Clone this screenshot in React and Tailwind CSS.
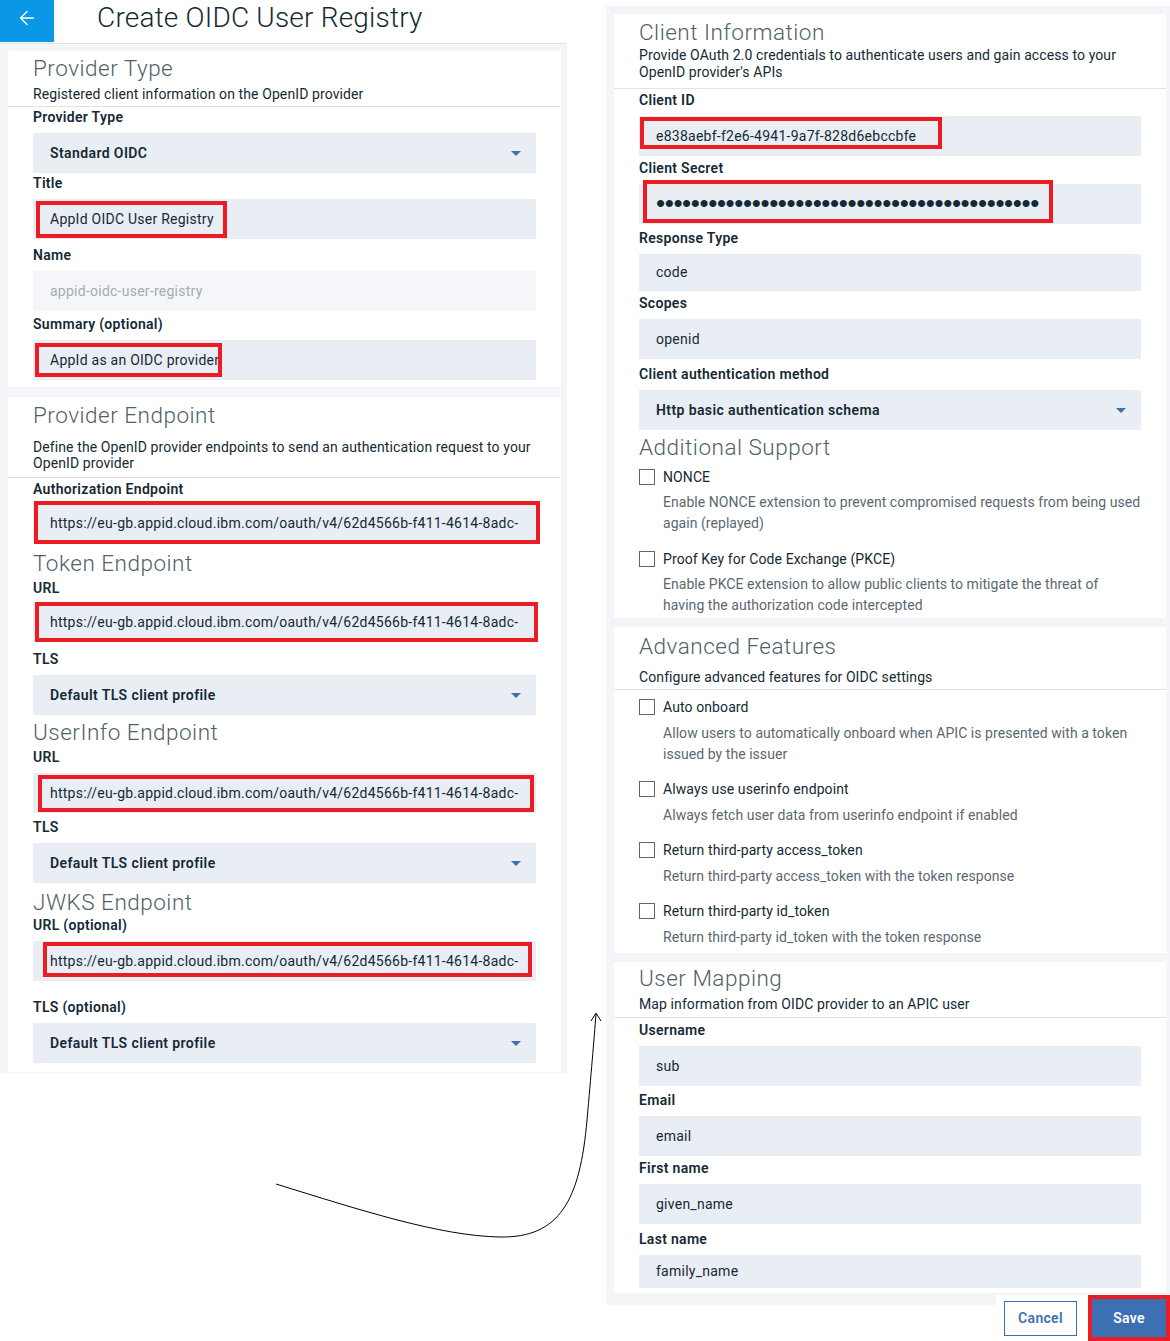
import React from 'react';
import { ArrowLeft } from 'lucide-react';

function Caret() {
  return (
    <svg width="10" height="5" viewBox="0 0 10 5" className="absolute right-[15px] top-[18px]">
      <path d="M0 0h10L5 5z" fill="#3d70b2" />
    </svg>
  );
}

function Heading({ children, className = '' }) {
  return (
    <div className={`text-[22.5px] font-light tracking-[0.5px] leading-[28px] text-[#515f69] whitespace-nowrap ${className}`}>
      {children}
    </div>
  );
}

function Label({ children, className = '' }) {
  return (
    <div className={`h-[18px] leading-[18px] text-[14px] tracking-[0.3px] font-semibold text-[#152935] whitespace-nowrap ${className}`}>
      {children}
    </div>
  );
}

function Field({ className = '', h = 'h-[40px]', text, bold = false, disabled = false, select = false, red, children }) {
  return (
    <div
      className={`relative ${h} ${disabled ? 'bg-[#f4f6f9] text-[#a3acb4]' : 'bg-[#e9eef5] text-[#152935]'} flex items-center px-[17px] text-[14px] ${bold ? 'font-semibold tracking-[0.4px]' : 'tracking-[0.25px]'} whitespace-nowrap ${className}`}
    >
      {children ?? text}
      {select && <Caret />}
      {red && <div className={`absolute border-[4px] border-[#ec1c24] ${red}`} />}
    </div>
  );
}

function Check({ label, className = '' }) {
  return (
    <div className={`flex items-center h-[18px] ${className}`}>
      <div className="w-[16px] h-[16px] border border-[#5a6872] bg-white shrink-0" />
      <div className="ml-[8px] text-[14px] leading-[18px] tracking-[0.1px] text-[#152935] whitespace-nowrap">{label}</div>
    </div>
  );
}

function Desc({ children, className = '' }) {
  return (
    <div className={`pl-[24px] text-[14px] leading-[21px] tracking-[0.05px] text-[#5a6872] whitespace-nowrap ${className}`}>
      {children}
    </div>
  );
}

function CardDesc({ children, className = '', lh = 'leading-[17px]' }) {
  return (
    <div className={`text-[14px] ${lh} tracking-[0.1px] text-[#152935] whitespace-nowrap ${className}`}>{children}</div>
  );
}

const URL = 'https://eu-gb.appid.cloud.ibm.com/oauth/v4/62d4566b-f411-4614-8adc-';

export default function App() {
  return (
    <div className="relative w-[1170px] h-[1341px] overflow-hidden bg-white font-['Roboto','Liberation_Sans',sans-serif] flex items-start">
      {/* Left column */}
      <div className="w-[567px] shrink-0 flex flex-col">
        <div className="h-[44px] border-b border-[#dfe3e6] flex items-start">
          <div className="w-[54px] h-[42px] bg-[#0a97e6] flex items-center justify-center pb-[6px]">
            <ArrowLeft size={22} strokeWidth={1.5} color="#ffffff" />
          </div>
          <div className="ml-[43px] text-[28px] font-light tracking-[0.2px] leading-[36px] text-[#152935] whitespace-nowrap">
            Create OIDC User Registry
          </div>
        </div>
        <div className="bg-[#f4f5f8] pt-[7px] pl-[8px] pr-[6px] pb-[1px] flex flex-col gap-[10px]">
          {/* Card 1 */}
          <div className="bg-white pt-[3px] pb-[7px]">
            <div className="px-[25px] pb-[4px] border-b border-[#dfe3e6]">
              <Heading>Provider Type</Heading>
              <CardDesc className="mt-[4px]" lh="leading-[16px]">
                Registered client information on the OpenID provider
              </CardDesc>
            </div>
            <div className="px-[25px]">
              <Label className="mt-[1px]">Provider Type</Label>
              <Field className="mt-[7px]" select bold text="Standard OIDC" />
              <Label className="mt-[1px]">Title</Label>
              <Field className="mt-[7px]" text="AppId OIDC User Registry" red="left-[3px] top-[2px] w-[191px] h-[37px]" />
              <Label className="mt-[7px]">Name</Label>
              <Field className="mt-[7px]" disabled text="appid-oidc-user-registry" />
              <Label className="mt-[4px]">Summary (optional)</Label>
              <Field className="mt-[7px]" text="AppId as an OIDC provider" red="left-[2px] top-[3px] w-[187px] h-[34px]" />
            </div>
          </div>
          {/* Card 2 */}
          <div className="bg-white pt-[4px] pb-[9px]">
            <div className="px-[25px] pb-[6px] border-b border-[#dfe3e6]">
              <Heading>Provider Endpoint</Heading>
              <CardDesc className="mt-[10px]" lh="leading-[16px]">
                Define the OpenID provider endpoints to send an authentication request to your
                <br />
                OpenID provider
              </CardDesc>
            </div>
            <div className="px-[25px]">
              <Label className="mt-[2px]">Authorization Endpoint</Label>
              <Field className="mt-[5px]" text={URL} red="left-[1px] -top-[2px] w-[506px] h-[43px]" />
              <Heading className="mt-[6px]">Token Endpoint</Heading>
              <Label className="mt-[2px]">URL</Label>
              <Field className="mt-[5px]" text={URL} red="left-[2px] top-0 w-[503px] h-[40px]" />
              <Label className="mt-[8px]">TLS</Label>
              <Field className="mt-[7px]" select bold text="Default TLS client profile" />
              <Heading className="mt-[3px]">UserInfo Endpoint</Heading>
              <Label className="mt-[2px]">URL</Label>
              <Field className="mt-[7px]" text={URL} red="left-[5px] top-[2px] w-[496px] h-[37px]" />
              <Label className="mt-[5px]">TLS</Label>
              <Field className="mt-[7px]" select bold text="Default TLS client profile" />
              <Heading className="mt-[5px]">JWKS Endpoint</Heading>
              <Label>URL (optional)</Label>
              <Field className="mt-[7px]" text={URL} red="left-[10px] top-[1px] w-[489px] h-[35px]" />
              <Label className="mt-[17px]">TLS (optional)</Label>
              <Field className="mt-[7px]" select bold text="Default TLS client profile" />
            </div>
          </div>
        </div>
      </div>

      {/* Right column */}
      <div className="ml-[39px] w-[564px] shrink-0 flex flex-col">
        <div className="mt-[6px] bg-[#f4f5f8] pt-[8px] pb-[12px] pl-[8px] pr-[4px] flex flex-col gap-[9px]">
          {/* Client Information */}
          <div className="bg-white pt-[4px] pb-[2px]">
            <div className="px-[25px] pb-[7px] border-b border-[#dfe3e6]">
              <Heading>Client Information</Heading>
              <CardDesc className="mt-[1px]">
                Provide OAuth 2.0 credentials to authenticate users and gain access to your
                <br />
                OpenID provider's APIs
              </CardDesc>
            </div>
            <div className="pl-[25px] pr-[25px]">
              <Label className="mt-[2px]">Client ID</Label>
              <Field className="mt-[7px]" text="e838aebf-f2e6-4941-9a7f-828d6ebccbfe" red="left-[1px] top-[1px] w-[302px] h-[32px]" />
              <Label className="mt-[3px]">Client Secret</Label>
              <Field className="mt-[7px]" red="left-[4px] -top-[4px] w-[410px] h-[43px]">
                <span className="font-['Liberation_Sans',sans-serif] text-[26px] leading-none tracking-[-0.4px] text-[#152935] -mt-[2px]">
                  {'\u2022'.repeat(44)}
                </span>
              </Field>
              <Label className="mt-[5px]">Response Type</Label>
              <Field className="mt-[7px]" h="h-[37px]" text="code" />
              <Label className="mt-[3px]">Scopes</Label>
              <Field className="mt-[7px]" text="openid" />
              <Label className="mt-[6px]">Client authentication method</Label>
              <Field className="mt-[7px]" select bold text="Http basic authentication schema" />
              <Heading className="mt-[3px]">Additional Support</Heading>
              <Check className="mt-[7px]" label="NONCE" />
              <Desc className="mt-[6px]">
                Enable NONCE extension to prevent compromised requests from being used
                <br />
                again (replayed)
              </Desc>
              <Check className="mt-[16px]" label="Proof Key for Code Exchange (PKCE)" />
              <Desc className="mt-[6px]">
                Enable PKCE extension to allow public clients to mitigate the threat of
                <br />
                having the authorization code intercepted
              </Desc>
            </div>
          </div>

          {/* Advanced Features */}
          <div className="bg-white pt-[5px] pb-[5px]">
            <div className="px-[25px] pb-[3px] border-b border-[#dfe3e6]">
              <Heading>Advanced Features</Heading>
              <CardDesc className="mt-[9px]">Configure advanced features for OIDC settings</CardDesc>
            </div>
            <div className="px-[25px]">
              <Check className="mt-[8px]" label="Auto onboard" />
              <Desc className="mt-[7px]">
                Allow users to automatically onboard when APIC is presented with a token
                <br />
                issued by the issuer
              </Desc>
              <Check className="mt-[15px]" label="Always use userinfo endpoint" />
              <Desc className="mt-[7px]">Always fetch user data from userinfo endpoint if enabled</Desc>
              <Check className="mt-[15px]" label="Return third-party access_token" />
              <Desc className="mt-[7px]">Return third-party access_token with the token response</Desc>
              <Check className="mt-[15px]" label="Return third-party id_token" />
              <Desc className="mt-[7px]">Return third-party id_token with the token response</Desc>
            </div>
          </div>

          {/* User Mapping */}
          <div className="bg-white pt-[2px] pb-[5px]">
            <div className="px-[25px] pb-[4px] border-b border-[#dfe3e6]">
              <Heading>User Mapping</Heading>
              <CardDesc className="mt-[4px]">Map information from OIDC provider to an APIC user</CardDesc>
            </div>
            <div className="px-[25px]">
              <Label className="mt-[3px]">Username</Label>
              <Field className="mt-[7px]" text="sub" />
              <Label className="mt-[5px]">Email</Label>
              <Field className="mt-[7px]" text="email" />
              <Label className="mt-[3px]">First name</Label>
              <Field className="mt-[7px]" text="given_name" />
              <Label className="mt-[6px]">Last name</Label>
              <Field className="mt-[7px]" h="h-[33px]" text="family_name" />
            </div>
          </div>
        </div>

        {/* Buttons */}
        <div className="self-end -mt-[10px] w-[174px] h-[46px] bg-white flex items-start">
          <button className="ml-[8px] mt-[6px] w-[73px] h-[35px] border border-[#3d70b2] bg-white text-[#3d70b2] text-[14px] font-semibold tracking-[0.3px]">
            Cancel
          </button>
          <div className="ml-[11px] w-[82px] h-[46px] border-[4px] border-[#ec1c24] p-0">
            <button className="w-full h-full bg-[#3d70b2] text-white text-[14px] font-semibold tracking-[0.3px]">Save</button>
          </div>
        </div>
      </div>

      {/* Hand-drawn arrow annotation */}
      <svg className="absolute left-0 top-0 pointer-events-none" width="1170" height="1341" viewBox="0 0 1170 1341">
        <path
          d="M276 1184 C 360 1210, 440 1236, 500 1237 C 560 1238, 580 1200, 587 1120 C 591 1075, 594 1040, 596 1014"
          fill="none"
          stroke="#000"
          strokeWidth="1"
        />
        <path d="M591 1021 L596 1013 L601 1021" fill="none" stroke="#000" strokeWidth="1" />
      </svg>
    </div>
  );
}
